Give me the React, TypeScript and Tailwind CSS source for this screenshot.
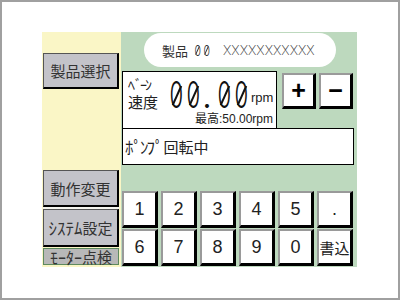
import React from "react";

const jp = { fontFamily: '"Noto Sans CJK JP", sans-serif' };
const lat = { fontFamily: '"Liberation Sans", "Noto Sans CJK JP", sans-serif' };
const dig = { fontFamily: 'Inter, "Liberation Sans", sans-serif' };

function LeftBtn({ children, h, className = "" }: { children: React.ReactNode; h: string; className?: string }) {
  return (
    <div
      className={`${h} w-[76px] flex items-center justify-center bg-[#c3c3c9] text-[#333] text-[15px] leading-none border-t border-l border-r-2 border-b-2 border-t-[#555] border-l-[#555] border-r-black border-b-black ${className}`}
      style={jp}
    >
      {children}
    </div>
  );
}

function Key({ label, jpText = false }: { label: string; jpText?: boolean }) {
  return (
    <div
      className={`h-[37px] w-[36px] bg-white flex items-center justify-center text-[#222] leading-none border-t-2 border-l-2 border-r-[3px] border-b-[3px] border-t-[#9a9a9a] border-l-[#9a9a9a] border-r-black border-b-black ${jpText ? "text-[15px]" : "text-[18px]"}`}
      style={jpText ? jp : lat}
    >
      {label}
    </div>
  );
}

function BigZero() {
  return (
    <span className="relative w-[17px] h-[30px] inline-flex justify-center">
      <span className="inline-block scale-x-[0.6] text-[37px] leading-[30px] font-light text-[#111]" style={dig}>
        0
      </span>
      <span className="absolute left-[8px] top-[4.5px] w-[1.5px] h-[21px] bg-[#111] rotate-[24deg]" />
    </span>
  );
}

function SmallZero() {
  return (
    <span className="relative inline-flex w-[9px] justify-center">
      <span className="inline-block scale-x-[0.7] text-[15px] leading-none font-light text-[#333]" style={dig}>
        0
      </span>
      <span className="absolute left-[4px] top-[3px] w-px h-[9px] bg-[#333] rotate-[24deg]" />
    </span>
  );
}

export default function App() {
  return (
    <div className="w-[400px] h-[300px] bg-white border-2 border-[#a0a0a0] pl-[40px] pt-[30px]">
      <div className="flex w-[315px] h-[235px]">
        {/* left yellow column */}
        <div className="w-[79px] bg-[#faf6c6] flex flex-col items-start pl-[1px] pt-[21px]">
          <LeftBtn h="h-[36px]">製品選択</LeftBtn>
          <LeftBtn h="h-[37px]" className="mt-[81px]">動作変更</LeftBtn>
          <div className="h-[2px] w-[76px] bg-[#f4f4ee]" />
          <LeftBtn h="h-[38px]">
            <span className="text-[17px]">ｼｽﾃﾑ</span>
            <span>設定</span>
          </LeftBtn>
          <div
            className="mt-[1px] h-[17px] w-[76px] flex items-center justify-center bg-[#b8b8b8] text-[#333] text-[15px] leading-none border border-[#5e8a5e]"
            style={jp}
          >
            <span className="text-[16px]">ﾓｰﾀｰ</span>
            <span>点検</span>
          </div>
        </div>

        {/* right green column */}
        <div className="flex-1 bg-[#bdd9be] flex flex-col pl-[1px]">
          <div className="mt-[1px] ml-[22px] w-[192px] h-[34px] rounded-full bg-white flex items-center pl-[18px] text-[#333]">
            <span className="text-[13px] leading-none" style={jp}>製品</span>
            <span className="ml-[5px] inline-flex">
              <SmallZero />
              <SmallZero />
            </span>
            <span className="ml-[12px] text-[13px] leading-none font-extralight text-[#333]" style={dig}>
              XXXXXXXXXXX
            </span>
          </div>

          <div className="mt-[4px] flex items-start">
            <div className="w-[155px] h-[58px] bg-white border border-black flex flex-col">
              <div className="flex items-start pl-[5px]">
                <div className="w-[40px] mt-[5px] flex flex-col text-[#222]" style={jp}>
                  <span className="text-[14px] leading-[14px] tracking-[-2px]">ﾍﾞｰﾝ</span>
                  <span className="text-[15px] leading-[15px] mt-[3px]">速度</span>
                </div>
                <div className="mt-[8px] flex">
                  <BigZero />
                  <BigZero />
                  <span className="w-[10px] h-[30px] mr-[4px] inline-flex justify-center">
                    <span className="inline-block text-[37px] leading-[30px] font-light text-[#111]" style={dig}>.</span>
                  </span>
                  <BigZero />
                  <BigZero />
                </div>
                <span className="mt-[19px] ml-[1px] text-[13px] leading-none text-[#222]" style={lat}>rpm</span>
              </div>
              <div className="flex-1 flex items-end justify-end pr-[3px] pb-[3px] text-[#222]">
                <span className="text-[12px] leading-none" style={lat}>最高:50.00rpm</span>
              </div>
            </div>
            <div
              className="ml-[5px] mt-[2px] w-[34px] h-[36px] bg-white flex items-center justify-center text-[25px] font-bold leading-none text-black border-t-2 border-l-2 border-r-[3px] border-b-[3px] border-t-[#9a9a9a] border-l-[#9a9a9a] border-r-black border-b-black"
              style={lat}
            >
              +
            </div>
            <div
              className="ml-[3px] mt-[2px] w-[34px] h-[36px] bg-white flex items-center justify-center text-[25px] font-bold leading-none text-black border-t-2 border-l-2 border-r-[3px] border-b-[3px] border-t-[#9a9a9a] border-l-[#9a9a9a] border-r-black border-b-black"
              style={lat}
            >
              −
            </div>
          </div>

          <div
            className="-mt-px w-[232px] h-[37px] bg-white border border-black flex items-center pl-[2px] text-[15px] leading-none text-[#222]"
            style={jp}
          >
            <span className="text-[17px] tracking-[-2px]">ﾎﾟﾝﾌﾟ</span>
            <span className="ml-[2px]">回転中</span>
          </div>

          <div className="mt-[26px] grid grid-cols-[repeat(6,36px)] gap-x-[3px] gap-y-[1px]">
            {["1", "2", "3", "4", "5", "."].map((k) => (
              <Key key={k} label={k} />
            ))}
            {["6", "7", "8", "9", "0"].map((k) => (
              <Key key={k} label={k} />
            ))}
            <Key label="書込" jpText />
          </div>
        </div>
      </div>
    </div>
  );
}
